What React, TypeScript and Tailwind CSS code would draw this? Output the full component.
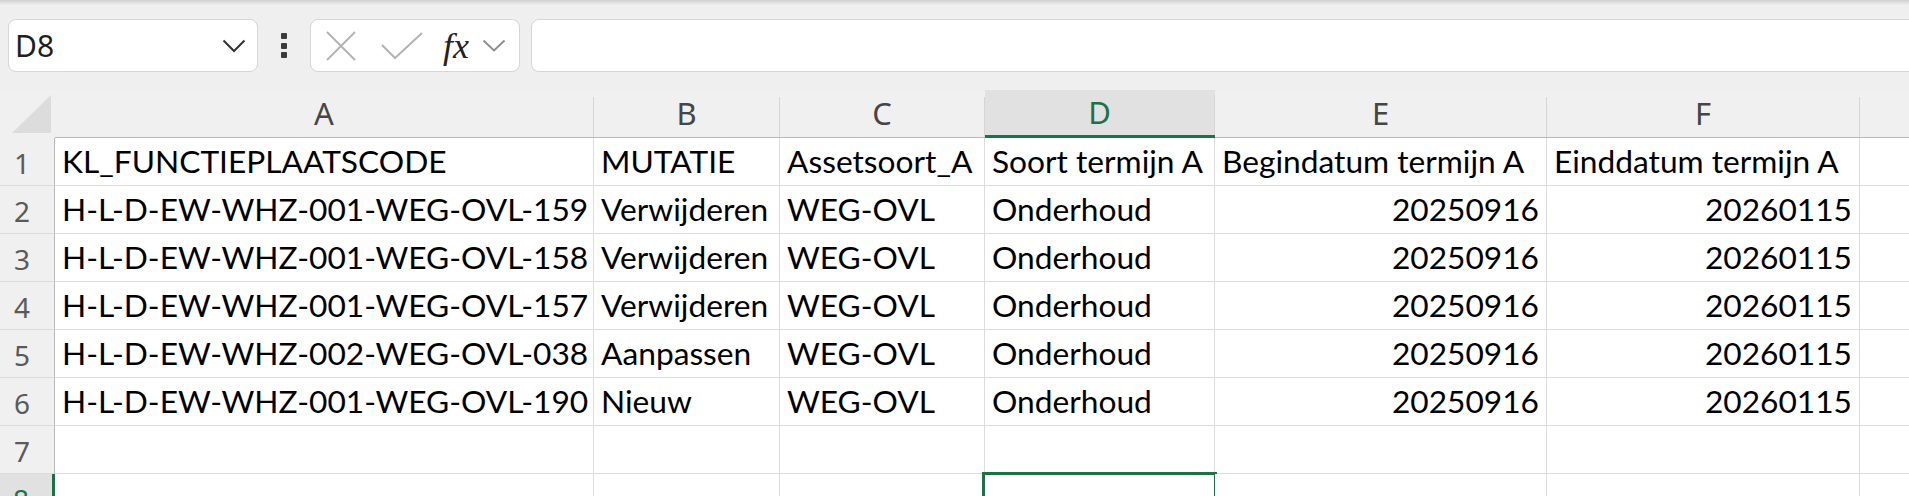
import React from 'react';

type Col = { key: string; width: string; right?: boolean };

const columns: Col[] = [
  { key: 'A', width: 'w-[539px]' },
  { key: 'B', width: 'w-[186px]' },
  { key: 'C', width: 'w-[205px]' },
  { key: 'D', width: 'w-[230px]' },
  { key: 'E', width: 'w-[332px]', right: true },
  { key: 'F', width: 'w-[313px]', right: true },
];

const header = [
  'KL_FUNCTIEPLAATSCODE',
  'MUTATIE',
  'Assetsoort_A',
  'Soort termijn A',
  'Begindatum termijn A',
  'Einddatum termijn A',
];

const data = [
  ['H-L-D-EW-WHZ-001-WEG-OVL-159', 'Verwijderen', 'WEG-OVL', 'Onderhoud', '20250916', '20260115'],
  ['H-L-D-EW-WHZ-001-WEG-OVL-158', 'Verwijderen', 'WEG-OVL', 'Onderhoud', '20250916', '20260115'],
  ['H-L-D-EW-WHZ-001-WEG-OVL-157', 'Verwijderen', 'WEG-OVL', 'Onderhoud', '20250916', '20260115'],
  ['H-L-D-EW-WHZ-002-WEG-OVL-038', 'Aanpassen', 'WEG-OVL', 'Onderhoud', '20250916', '20260115'],
  ['H-L-D-EW-WHZ-001-WEG-OVL-190', 'Nieuw', 'WEG-OVL', 'Onderhoud', '20250916', '20260115'],
  ['', '', '', '', '', ''],
  ['', '', '', '', '', ''],
];

const selectedCol = 3;
const selectedRow = 8;

function Toolbar() {
  return (
    <div className="flex h-[53px] items-stretch pl-[8px]">
      <div className="flex w-[250px] items-center justify-between rounded-[8px] border border-[#d6d6d6] bg-white pl-[6px] pr-[11px]">
        <span className="font-['Noto_Sans',sans-serif] text-[30px] leading-none text-[#1f1f1f]">D8</span>
        <svg width="24" height="14" viewBox="0 0 24 14" fill="none">
          <polyline points="1.5,1.5 12,12 22.5,1.5" stroke="#333" strokeWidth="2" />
        </svg>
      </div>
      <div className="flex w-[52px] flex-col items-center justify-center gap-[3.5px]">
        <span className="h-[6px] w-[6px] rounded-[1px] bg-[#3b3b3b]" />
        <span className="h-[6px] w-[6px] rounded-[1px] bg-[#3b3b3b]" />
        <span className="h-[6px] w-[6px] rounded-[1px] bg-[#3b3b3b]" />
      </div>
      <div className="flex w-[210px] items-center rounded-[8px] border border-[#d6d6d6] bg-white pl-[15px]">
        <svg width="30" height="30" viewBox="0 0 30 30" fill="none">
          <path d="M1 1 L29 29 M29 1 L1 29" stroke="#b4b4b4" strokeWidth="2" />
        </svg>
        <svg className="ml-[25px]" width="42" height="28" viewBox="0 0 42 28" fill="none">
          <polyline points="1,13 14,26 41,1" stroke="#b4b4b4" strokeWidth="2" />
        </svg>
        <span className="ml-[20px] font-['Liberation_Serif',serif] text-[36px] italic leading-none text-[#222]">fx</span>
        <svg className="ml-[13px]" width="24" height="13" viewBox="0 0 24 13" fill="none">
          <polyline points="1.5,1.5 12,11.5 22.5,1.5" stroke="#8c8c8c" strokeWidth="1.8" />
        </svg>
      </div>
      <div className="ml-[11px] -mr-[20px] flex-1 rounded-[8px] border border-[#d6d6d6] bg-white" />
    </div>
  );
}

function HeaderRow() {
  return (
    <div className="flex h-[48px] bg-[#f0f0f0] font-['Noto_Sans',sans-serif]">
      <div className="flex h-[48px] w-[55px] items-end justify-end pb-[5px] pr-[4px]">
        <svg width="39" height="38" viewBox="0 0 39 38">
          <polygon points="39,0 39,38 0,38" fill="#dcdcdc" />
        </svg>
      </div>
      {columns.map((c, i) => {
        const sel = i === selectedCol;
        return (
          <div
            key={c.key}
            className={`flex h-[48px] shrink-0 ${c.width} ${
              sel ? 'border-b-[3px] border-[#1e7145] bg-[#e1e1e1]' : 'border-b border-[#b9b9b9]'
            }`}
          >
            <div
              className={`flex flex-1 items-center justify-center text-[31px] leading-none ${
                sel ? 'text-[#1e7145]' : 'text-[#454545]'
              }`}
            >
              {c.key}
            </div>
            <div className="h-[40px] w-px self-end bg-[#d6d6d6]" />
          </div>
        );
      })}
      <div className="flex-1 border-b border-[#b9b9b9]" />
    </div>
  );
}

function DataRow({ n, cells }: { n: number; cells: string[] }) {
  const rowSel = n === selectedRow;
  return (
    <div className="flex h-[48px]">
      <div
        className={`flex h-[48px] w-[55px] shrink-0 items-center justify-center border-b border-[#dcdcdc] pr-[10px] pt-[3px] font-['Noto_Sans',sans-serif] text-[28px] leading-none ${
          rowSel
            ? 'border-r-[3px] border-r-[#1e7145] bg-[#e1e1e1] text-[#1e7145]'
            : 'border-r border-r-[#b9b9b9] bg-[#f0f0f0] text-[#5a5a5a]'
        }`}
      >
        {n}
      </div>
      {columns.map((c, i) => {
        const isSel = rowSel && i === selectedCol;
        return (
          <div
            key={c.key}
            className={`relative flex h-[48px] shrink-0 items-center whitespace-nowrap border-b border-r border-[#dcdcdc] bg-white px-[7px] font-['Lato',sans-serif] text-[31.7px] leading-none text-black ${
              c.width
            } ${c.right && n > 1 ? 'justify-end' : 'justify-start'}`}
          >
            {cells[i]}
            {isSel && (
              <div className="absolute -left-[3px] -right-[3px] -top-[2px] bottom-0 border-[3px] border-[#1e7145]" />
            )}
          </div>
        );
      })}
      <div className="flex-1 border-b border-[#dcdcdc] bg-white" />
    </div>
  );
}

export default function App() {
  const rows = [header, ...data];
  return (
    <div className="relative h-[496px] w-[1909px] overflow-hidden bg-[#efefef]">
      <div className="h-[5px] bg-linear-to-b from-[#cfcfcf] to-[#efefef]" />
      <div className="pt-[14px]">
        <Toolbar />
      </div>
      <div className="mt-[18px]">
        <HeaderRow />
        {rows.map((r, i) => (
          <DataRow key={i} n={i + 1} cells={r} />
        ))}
      </div>
    </div>
  );
}
